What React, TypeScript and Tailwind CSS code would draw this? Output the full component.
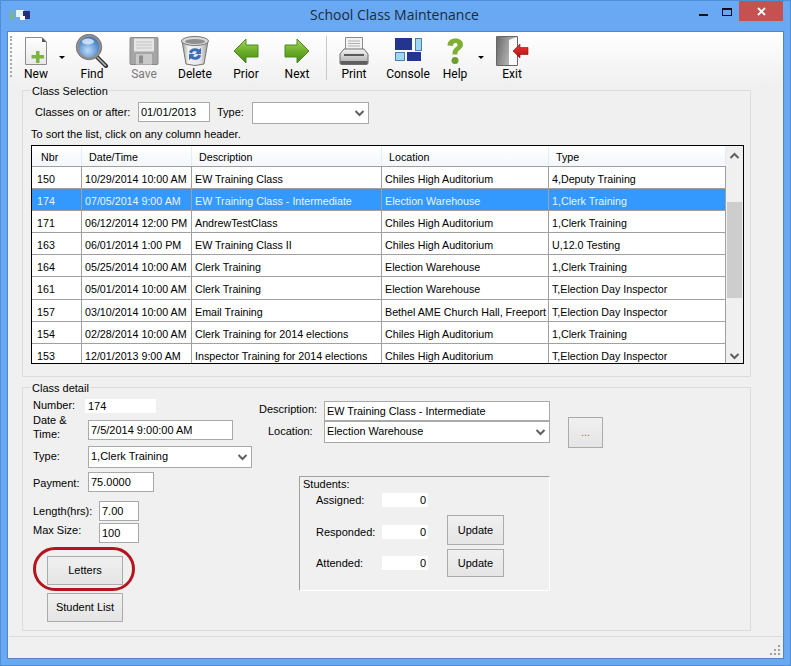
import React from 'react';

const rows = [
  ['150', '10/29/2014 10:00 AM', 'EW Training Class', 'Chiles High Auditorium', '4,Deputy Training'],
  ['174', '07/05/2014 9:00 AM', 'EW Training Class - Intermediate', 'Election Warehouse', '1,Clerk Training'],
  ['171', '06/12/2014 12:00 PM', 'AndrewTestClass', 'Chiles High Auditorium', '1,Clerk Training'],
  ['163', '06/01/2014 1:00 PM', 'EW Training Class II', 'Chiles High Auditorium', 'U,12.0 Testing'],
  ['164', '05/25/2014 10:00 AM', 'Clerk Training', 'Election Warehouse', '1,Clerk Training'],
  ['161', '05/01/2014 10:00 AM', 'Clerk Training', 'Election Warehouse', 'T,Election Day Inspector'],
  ['157', '03/10/2014 10:00 AM', 'Email Training', 'Bethel AME Church Hall, Freeport', 'T,Election Day Inspector'],
  ['154', '02/28/2014 10:00 AM', 'Clerk Training for 2014 elections', 'Chiles High Auditorium', '1,Clerk Training'],
  ['153', '12/01/2013 9:00 AM', 'Inspector Training for 2014 elections', 'Chiles High Auditorium', 'T,Election Day Inspector'],
];
const headers = ['Nbr', 'Date/Time', 'Description', 'Location', 'Type'];
const colWidths = ['w-[50px]', 'w-[110px]', 'w-[190px]', 'w-[167px]', 'w-[177px]'];

function Chevron({ up = false }: { up?: boolean }) {
  return (
    <svg width="11" height="8" viewBox="0 0 11 8">
      <path d={up ? 'M1.5 6 5.5 2 9.5 6' : 'M1.5 2 5.5 6 9.5 2'} fill="none" stroke="#606060" strokeWidth="2" />
    </svg>
  );
}

function Input({ value, className }: { value: string; className: string }) {
  return <div className={`bg-white border border-[#a9a9a9] flex items-center pl-[2px] whitespace-nowrap ${className}`}>{value}</div>;
}

function Select({ value, className }: { value?: string; className: string }) {
  return (
    <div className={`bg-white border border-[#a9a9a9] flex items-center justify-between pl-[2px] pr-[3px] whitespace-nowrap ${className}`}>
      <span className="-mt-[2px]">{value}</span>
      <Chevron />
    </div>
  );
}

function Btn({ label, className }: { label: string; className: string }) {
  return (
    <div className={`border border-[#ababab] bg-gradient-to-b from-[#f0f0f0] to-[#e5e5e5] flex items-center justify-center ${className}`}>{label}</div>
  );
}

function ToolItem({ label, width, disabled, children }: { label: string; width: string; disabled?: boolean; children: React.ReactNode }) {
  return (
    <div className={`flex flex-col items-center shrink-0 ${width}`}>
      <div className="h-[32px] flex items-center justify-center">{children}</div>
      <div className={`text-[12px] leading-[14px] whitespace-nowrap ${disabled ? 'text-[#7a7a7a]' : 'text-black'}`} style={{ fontFamily: 'Roboto, sans-serif' }}>{label}</div>
    </div>
  );
}

function DropArrow({ width }: { width: string }) {
  return (
    <div className={`flex justify-center shrink-0 pt-[21px] ${width}`}>
      <div className="w-0 h-0 border-x-[3px] border-x-transparent border-t-[3px] border-t-black" />
    </div>
  );
}

function NewIcon() {
  return (
    <svg width="32" height="32" viewBox="0 0 32 32">
      <defs>
        <linearGradient id="docg" x1="0" y1="0" x2="0" y2="1"><stop offset="0" stopColor="#ffffff" /><stop offset="1" stopColor="#e8e8e8" /></linearGradient>
      </defs>
      <path d="M5.5 2.5H22L26.5 7V29.5H5.5Z" fill="url(#docg)" stroke="#8c8c8c" />
      <path d="M22 2.5V7H26.5Z" fill="#555" />
      <path d="M16 16h3.5v4H24v3.5h-4.5V28H16v-4.500h-4.500V20H16Z" fill="#7db33f" />
    </svg>
  );
}

function FindIcon() {
  return (
    <svg width="34" height="34" viewBox="0 0 34 34">
      <defs>
        <radialGradient id="lens" cx="0.45" cy="0.65" r="0.7"><stop offset="0" stopColor="#bcdcf8" /><stop offset="0.6" stopColor="#5e94d2" /><stop offset="1" stopColor="#2f5fa8" /></radialGradient>
      </defs>
      <path d="M21 22 31 32" stroke="#333" strokeWidth="4" strokeLinecap="round" />
      <path d="M21.500 22.500 30.500 31.500" stroke="#b8b8b8" strokeWidth="1.500" strokeLinecap="round" />
      <circle cx="14" cy="13" r="11.500" fill="url(#lens)" stroke="#8f8f8f" strokeWidth="2.500" />
      <circle cx="14" cy="13" r="12.800" fill="none" stroke="#555" strokeWidth="0.600" />
      <ellipse cx="13" cy="7.500" rx="6" ry="3" fill="#dcecfb" opacity="0.8" />
    </svg>
  );
}

function SaveIcon() {
  return (
    <svg width="32" height="32" viewBox="0 0 32 32">
      <rect x="2" y="2.500" width="28" height="27" rx="1" fill="#a5a5a5" stroke="#8a8a8a" />
      <rect x="6" y="3.500" width="20" height="13" fill="#e6e6e6" />
      <path d="M8 7h16M8 10h16M8 13h16" stroke="#c4c4c4" />
      <rect x="8" y="19" width="16" height="10.500" fill="#c9c9c9" />
      <rect x="11" y="20.500" width="4" height="8" fill="#8d8d8d" />
    </svg>
  );
}

function DeleteIcon() {
  return (
    <svg width="32" height="32" viewBox="0 0 32 32">
      <defs>
        <linearGradient id="bin" x1="0" y1="0" x2="1" y2="0"><stop offset="0" stopColor="#9a9a9a" /><stop offset="0.25" stopColor="#f2f2f2" /><stop offset="0.7" stopColor="#e6e6e6" /><stop offset="1" stopColor="#9c9c9c" /></linearGradient>
      </defs>
      <path d="M3 6 7 29Q16 32 25 29L29 6Z" fill="url(#bin)" stroke="#777" />
      <ellipse cx="16" cy="6" rx="13.500" ry="4.500" fill="#dadada" stroke="#777" />
      <ellipse cx="16" cy="6.500" rx="10" ry="2.500" fill="#8f8f8f" />
      <path d="M10 17.500A6 5 0 0 1 20 14.500L22 13V19H16L18 17A3 3 0 0 0 13 18.500Z" fill="#3c6cb4" />
      <path d="M22 20.500A6 5 0 0 1 12 23.500L10 25V19H16L14 21A3 3 0 0 0 19 19.500Z" fill="#3c6cb4" />
    </svg>
  );
}

function Arrow({ left, id }: { left?: boolean; id: string }) {
  return (
    <svg width="26" height="26" viewBox="0 0 26 26">
      <defs>
        <linearGradient id={id} x1="0" y1="0" x2="0" y2="1"><stop offset="0" stopColor="#a6d65c" /><stop offset="0.5" stopColor="#6dae2a" /><stop offset="1" stopColor="#3f8a17" /></linearGradient>
      </defs>
      <path d={left ? 'M1 13 13 1V7H25V19H13V25Z' : 'M25 13 13 1V7H1V19H13V25Z'} fill={`url(#${id})`} stroke="#4d8a22" />
    </svg>
  );
}

function PrintIcon() {
  return (
    <svg width="32" height="32" viewBox="0 0 32 32">
      <defs>
        <linearGradient id="prn" x1="0" y1="0" x2="0" y2="1"><stop offset="0" stopColor="#f4f4f4" /><stop offset="1" stopColor="#a8a8a8" /></linearGradient>
      </defs>
      <path d="M7.500 2.500H24.500V15H7.500Z" fill="#f2f2f2" stroke="#8c8c8c" />
      <path d="M10 6h12M10 8.500h12M10 11h12" stroke="#b0b0b0" />
      <path d="M6 14H26L30 19V28Q30 29.500 28 29.500H4Q2 29.500 2 28V19Z" fill="url(#prn)" stroke="#6f6f6f" />
      <rect x="6" y="19" width="20" height="2" fill="#5a5a5a" />
      <rect x="2.500" y="26" width="27" height="3" fill="#5e5e5e" />
    </svg>
  );
}

function ConsoleIcon() {
  return (
    <svg width="30" height="26" viewBox="0 0 30 26">
      <rect x="2" y="0" width="17" height="12" fill="#23358f" />
      <rect x="22.500" y="0.500" width="6" height="12" fill="#9fd6f2" stroke="#4a7fb0" />
      <rect x="2.500" y="14.500" width="9" height="8" fill="#9fd6f2" stroke="#4a7fb0" />
      <rect x="14" y="14" width="14" height="9" fill="#23358f" />
    </svg>
  );
}

function HelpIcon() {
  return (
    <svg width="20" height="28" viewBox="0 0 20 28">
      <path d="M2.500 8.500C2.500 4 6 1.500 10.500 1.500 15 1.500 18 4 18 7.500 18 10.500 16 12 14 13.500 12.500 14.600 12.500 15.500 12.500 17.500H7.500C7.500 14 8 12.500 10.500 10.500 12 9.300 12.500 8.700 12.500 7.800 12.500 6.600 11.700 6 10.400 6 9 6 8.100 7 8 9Z" fill="#7fae35" />
      <circle cx="10" cy="23.500" r="3.500" fill="#6f9e2c" />
    </svg>
  );
}

function ExitIcon() {
  return (
    <svg width="34" height="32" viewBox="0 0 34 32">
      <defs>
        <linearGradient id="door" x1="0" y1="0" x2="1" y2="0.300"><stop offset="0" stopColor="#6a6a6a" /><stop offset="1" stopColor="#c8c8c8" /></linearGradient>
        <linearGradient id="red" x1="0" y1="0" x2="0" y2="1"><stop offset="0" stopColor="#ee3a3a" /><stop offset="1" stopColor="#b00c0c" /></linearGradient>
      </defs>
      <path d="M1.500 1.500H22.500V30.500H1.500Z" fill="#fafafa" stroke="#666" />
      <path d="M2 2H22L14 5V30L2 30Z" fill="url(#door)" />
      <path d="M11 14 13 16 11 18" fill="none" stroke="#9a9a9a" />
      <path d="M18 16 25 9V12.500H33V19.500H25V23Z" fill="url(#red)" stroke="#8e0c0c" strokeWidth="0.600" />
    </svg>
  );
}

function Group({ title, className, children }: { title: string; className: string; children: React.ReactNode }) {
  return (
    <div className={`relative border border-[#dcdcdc] ${className}`}>
      <div className="absolute left-[8px] top-[-6px] bg-[#f0f0f0] pl-[1px] pr-[1px] leading-[13px] text-black">{title}</div>
      {children}
    </div>
  );
}

export default function App() {
  return (
    <div className="w-[791px] h-[666px] bg-[#69a9f3] border border-[#4f8fd6] flex flex-col overflow-hidden text-[11px] text-black" style={{ fontFamily: '"Liberation Sans", Arial, sans-serif' }}>
      {/* title bar */}
      <div className="h-[30px] shrink-0 relative flex items-start justify-center">
        <div className="absolute left-[10px] top-[9px] flex items-center gap-[3px]">
          <div className="w-[2px] h-[9px] border-l-2 border-dashed border-[#8fbf30]" />
          <svg width="14" height="11" viewBox="0 0 14 11">
            <rect x="0" y="0" width="8" height="7" fill="#e8f0fa" />
            <rect x="7" y="1" width="7" height="8" fill="#26307a" />
            <rect x="4" y="6" width="5" height="4" fill="#ffffff" />
          </svg>
        </div>
        <div className="mt-[5px] -ml-[2px] text-[14px] leading-[18px] text-[#1c2a3a]" style={{ fontFamily: '"Open Sans", sans-serif' }}>School Class Maintenance</div>
        <div className="absolute right-[7px] top-0 flex items-start">
          <div className="w-[9px] h-[2px] bg-[#111] mt-[13px] mr-[14px]" />
          <div className="w-[10px] h-[8px] border border-[#111] border-t-2 mt-[7px] mr-[7px]" />
          <div className="w-[44px] h-[20px] bg-[#c75050] flex items-center justify-center">
            <svg width="9" height="9" viewBox="0 0 9 9"><path d="M1 1 8 8M8 1 1 8" stroke="#fff" strokeWidth="1.800" /></svg>
          </div>
        </div>
      </div>

      {/* client area */}
      <div className="mx-[6px] mb-[6px] flex-1 min-h-0 bg-[#f0f0f0] border border-[#4f86c4] flex flex-col">
        {/* toolbar */}
        <div className="h-[53px] shrink-0 bg-gradient-to-b from-white to-[#f0f0f0] flex items-start pt-[3px]">
          <div className="ml-[2px] mt-[1px] w-[2px] h-[41px] border-l-2 border-dotted border-[#a8a8a8] shrink-0" />
          <div className="w-[2px] shrink-0" />
          <ToolItem label="New" width="w-[44px]"><NewIcon /></ToolItem>
          <DropArrow width="w-[8px]" />
          <ToolItem label="Find" width="w-[52px]"><FindIcon /></ToolItem>
          <ToolItem label="Save" width="w-[52px]" disabled><SaveIcon /></ToolItem>
          <ToolItem label="Delete" width="w-[50px]"><DeleteIcon /></ToolItem>
          <ToolItem label="Prior" width="w-[52px]"><Arrow left id="prior" /></ToolItem>
          <ToolItem label="Next" width="w-[50px]"><Arrow id="next" /></ToolItem>
          <div className="w-[8px] shrink-0 flex justify-center"><div className="w-[1px] h-[44px] bg-[#c8c8c8] mt-[1px]" /></div>
          <ToolItem label="Print" width="w-[48px]"><PrintIcon /></ToolItem>
          <ToolItem label="Console" width="w-[60px]"><ConsoleIcon /></ToolItem>
          <ToolItem label="Help" width="w-[34px]"><HelpIcon /></ToolItem>
          <DropArrow width="w-[18px]" />
          <ToolItem label="Exit" width="w-[44px]"><ExitIcon /></ToolItem>
        </div>

        {/* class selection */}
        <Group title="Class Selection" className="ml-[14px] mt-[5px] w-[729px] h-[287px] shrink-0 pl-[12px]">
          <div className="flex items-start mt-[11px]">
            <div className="w-[103px] leading-[20px]">Classes on or after:</div>
            <Input value="01/01/2013" className="w-[72px] h-[20px]" />
            <div className="ml-[7px] w-[35px] leading-[20px]">Type:</div>
            <Select className="w-[117px] h-[22px]" />
          </div>
          <div className="-ml-[4px] mt-[3px] leading-[14px]">To sort the list, click on any column header.</div>
          <div className="-ml-[4px] mt-[4px] w-[713px] h-[219px] border border-black bg-white flex overflow-hidden text-[10.7px]">
            <div className="w-[694px] shrink-0">
              <div className="flex h-[21px] bg-gradient-to-b from-white to-[#f4f7fb] border-b border-[#a0a0a0]">
                {headers.map((h, i) => (
                  <div key={h} className={`${colWidths[i]} shrink-0 ${i === 0 ? 'pl-[9px]' : 'pl-[7px]'} leading-[23px] border-r border-[#e4ecf6]`}>{h}</div>
                ))}
              </div>
              {rows.map((r, n) => (
                <div key={r[0]} className={`flex ${n === 5 ? 'h-[23px]' : 'h-[22px]'} border-b border-[#a0a0a0] ${n === 1 ? 'bg-[#3399ff] text-[#e8f3ff]' : ''}`}>
                  {r.map((c, i) => (
                    <div key={i} className={`${colWidths[i]} shrink-0 ${i === 0 ? 'pl-[5px]' : 'pl-[3px]'} leading-[24px] whitespace-nowrap overflow-hidden border-r border-[#a0a0a0]`}>{c}</div>
                  ))}
                </div>
              ))}
            </div>
            <div className="flex-1 bg-[#f0f0f0] flex flex-col items-center pt-[6px]">
              <Chevron up />
              <div className="w-[15px] h-[96px] bg-[#cdcdcd] mt-[42px]" />
              <div className="mt-[54px]"><Chevron /></div>
            </div>
          </div>
        </Group>

        {/* class detail */}
        <Group title="Class detail" className="ml-[14px] mt-[10px] w-[729px] h-[244px] shrink-0 pl-[10px] pt-[11px] flex">
          <div className="w-[226px] shrink-0">
            <div className="flex items-center h-[14px]">
              <div className="w-[52px] -mt-[1px]">Number:</div>
              <div className="w-[71px] h-[14px] bg-white pl-[3px] leading-[14px]">174</div>
            </div>
            <div className="flex items-center h-[20px] mt-[7px]">
              <div className="w-[55px] leading-[14px] -mt-[6px]">Date &amp;<br />Time:</div>
              <Input value="7/5/2014 9:00:00 AM" className="w-[145px] h-[20px]" />
            </div>
            <div className="flex items-center h-[22px] mt-[6px]">
              <div className="w-[55px] -mt-[2px]">Type:</div>
              <Select value="1,Clerk Training" className="w-[164px] h-[22px]" />
            </div>
            <div className="flex items-center h-[20px] mt-[4px]">
              <div className="w-[55px] mt-[2px]">Payment:</div>
              <Input value="75.0000" className="w-[66px] h-[20px]" />
            </div>
            <div className="flex items-center h-[20px] mt-[9px]">
              <div className="w-[66px]">Length(hrs):</div>
              <Input value="7.00" className="w-[40px] h-[20px]" />
            </div>
            <div className="flex items-center h-[20px] mt-[2px]">
              <div className="w-[66px] -mt-[6px]">Max Size:</div>
              <Input value="100" className="w-[40px] h-[20px]" />
            </div>
            <div className="relative ml-[14px] mt-[13px] w-[76px]">
              <Btn label="Letters" className="w-[76px] h-[29px]" />
              <div className="absolute left-[-14px] top-[-9px] w-[102px] h-[44px] rounded-[24px] border-[3.5px] border-[#b5141d]" />
            </div>
            <Btn label="Student List" className="ml-[14px] mt-[8px] w-[76px] h-[29px]" />
          </div>

          <div className="shrink-0">
            <div className="flex items-start mt-[2px]">
              <div>
                <div className="flex items-center h-[20px]">
                  <div className="w-[65px] -mt-[4px]">Description:</div>
                  <Input value="EW Training Class - Intermediate" className="w-[226px] h-[20px] text-[10.8px]" />
                </div>
                <div className="flex items-center h-[22px]">
                  <div className="w-[65px] pl-[9px] -mt-[2px]">Location:</div>
                  <Select value="Election Warehouse" className="w-[226px] h-[22px] text-[10.8px]" />
                </div>
              </div>
              <Btn label="..." className="ml-[18px] mt-[16px] w-[35px] h-[31px] text-[#b06a20]" />
            </div>
            <div className="ml-[40px] mt-[28px] w-[251px] h-[115px] border border-[#a0a0a0] border-r-white border-b-white pl-[3px]">
              <div className="leading-[14px]">Students:</div>
              <div className="flex items-center h-[14px] mt-[2px] pl-[13px]">
                <div className="w-[66px]">Assigned:</div>
                <div className="w-[46px] h-[14px] bg-white text-right pr-[2px] leading-[14px]">0</div>
              </div>
              <div className="flex items-start h-[30px] mt-[8px] pl-[13px]">
                <div className="w-[66px] mt-[10px] leading-[14px]">Responded:</div>
                <div className="w-[46px] h-[14px] mt-[10px] bg-white text-right pr-[2px] leading-[14px]">0</div>
                <Btn label="Update" className="ml-[19px] w-[57px] h-[30px]" />
              </div>
              <div className="flex items-center h-[28px] mt-[4px] pl-[13px]">
                <div className="w-[66px]">Attended:</div>
                <div className="w-[46px] h-[14px] bg-white text-right pr-[2px] leading-[14px]">0</div>
                <Btn label="Update" className="ml-[19px] w-[57px] h-[28px]" />
              </div>
            </div>
          </div>
        </Group>

        {/* status bar */}
        <div className="mt-[5px] ml-[1px] mr-[1px] flex-1 border-t border-[#dcdcdc] flex justify-end items-end pr-[1px] pb-[2px]">
          <svg width="11" height="11" viewBox="0 0 11 11" fill="#a0a0a0">
            <rect x="8" y="0" width="2" height="2" /><rect x="4" y="4" width="2" height="2" /><rect x="8" y="4" width="2" height="2" />
            <rect x="0" y="8" width="2" height="2" /><rect x="4" y="8" width="2" height="2" /><rect x="8" y="8" width="2" height="2" />
          </svg>
        </div>
      </div>
    </div>
  );
}
